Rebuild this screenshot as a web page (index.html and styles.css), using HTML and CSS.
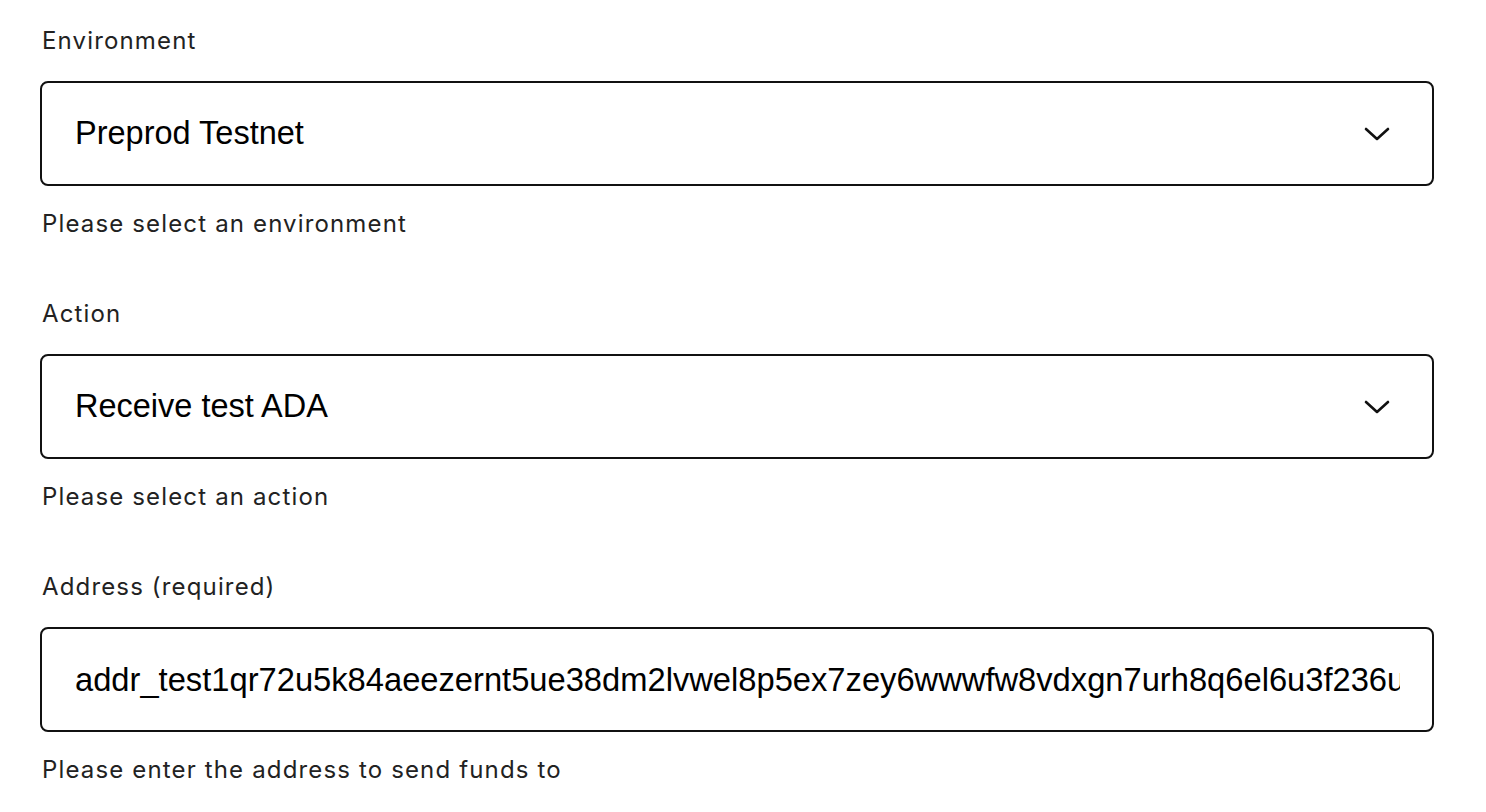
FILE: index.html
```html
<!DOCTYPE html>
<html>
<head>
<meta charset="utf-8">
<link rel="stylesheet" href="styles.css">
</head>
<body>
<form class="form">
  <div class="field">
    <label class="label">Environment</label>
    <div class="select">
      <span class="select-value">Preprod Testnet</span>
      <svg class="chevron" width="26" height="16" viewBox="0 0 26 16"><path d="M2 3 L13 13 L24 3" fill="none" stroke="#111" stroke-width="2.6" stroke-linecap="round" stroke-linejoin="round"/></svg>
    </div>
    <p class="help">Please select an environment</p>
  </div>
  <div class="field">
    <label class="label">Action</label>
    <div class="select">
      <span class="select-value">Receive test ADA</span>
      <svg class="chevron" width="26" height="16" viewBox="0 0 26 16"><path d="M2 3 L13 13 L24 3" fill="none" stroke="#111" stroke-width="2.6" stroke-linecap="round" stroke-linejoin="round"/></svg>
    </div>
    <p class="help">Please select an action</p>
  </div>
  <div class="field">
    <label class="label">Address (required)</label>
    <div class="select select-input">
      <input class="input" type="text" value="addr_test1qr72u5k84aeezernt5ue38dm2lvwel8p5ex7zey6wwwfw8vdxgn7urh8q6el6u3f236uhqpnvw9tlpg3p6rjxztu3c7q6yfgxq">
    </div>
    <p class="help">Please enter the address to send funds to</p>
  </div>
</form>
</body>
</html>
```

FILE: styles.css
```css
html, body {
  margin: 0;
  padding: 0;
  background: #ffffff;
}
.form {
  width: 1394px;
  padding: 27px 0 0 40px;
}
.field {
  margin-bottom: 62px;
}
.label {
  display: block;
  font-family: Inter, "Open Sans", sans-serif;
  font-size: 24px;
  line-height: 28px;
  letter-spacing: 1.15px;
  color: #222;
  margin: 0 0 26px 2px;
}
.select {
  box-sizing: border-box;
  height: 105px;
  border: 2px solid #111;
  border-radius: 8px;
  display: flex;
  align-items: center;
  justify-content: space-between;
  padding: 0 42px 0 33px;
  overflow: hidden;
}
.select-input {
  padding-right: 32px;
}
.select-value {
  font-family: "Liberation Sans", Arial, sans-serif;
  font-size: 32.5px;
  color: #000;
}
.chevron {
  display: block;
  flex: none;
}
.input {
  border: none;
  outline: none;
  width: 100%;
  padding: 0;
  margin: 0;
  background: transparent;
  font-family: "Liberation Sans", Arial, sans-serif;
  font-size: 32.7px;
  color: #000;
}
.help {
  font-family: Inter, "Open Sans", sans-serif;
  font-size: 24px;
  line-height: 28px;
  letter-spacing: 1.15px;
  color: #222;
  margin: 24px 0 0 2px;
}
```
